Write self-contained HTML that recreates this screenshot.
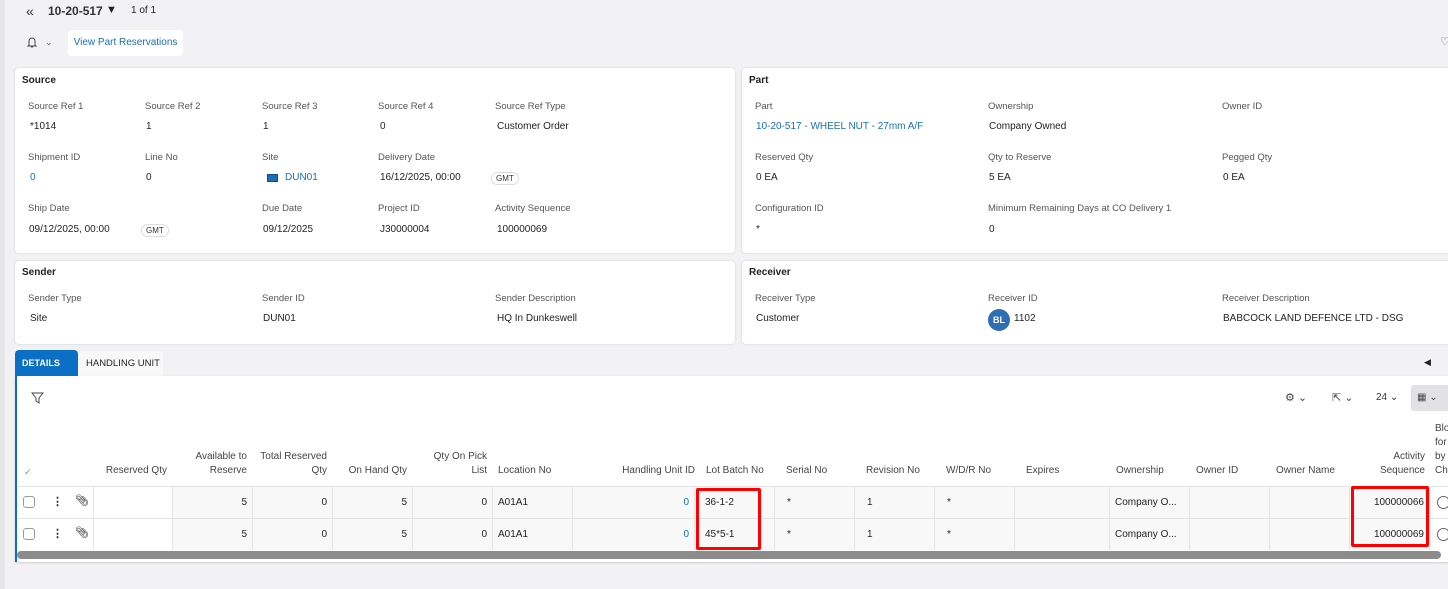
<!DOCTYPE html>
<html><head><meta charset="utf-8"><style>
*{box-sizing:border-box;margin:0;padding:0}
body{width:1448px;height:589px;overflow:hidden;background:#f2f1f3;font-family:"Liberation Sans",sans-serif;font-size:10px;color:#222;position:relative}
.a{position:absolute;white-space:nowrap}
.card{position:absolute;background:#fff;border-radius:4px;box-shadow:0 0 2px rgba(0,0,0,.15)}
.t{font-weight:bold;font-size:10px;color:#222}
.l{color:#555;font-size:9.5px}
.v{font-size:10px;color:#222}
.lnk{color:#1a6fb3}
.gmt{border:1px solid #ddd;border-radius:8px;font-size:8px;padding:1px 4px;color:#333}
.hd{color:#444;font-size:10px;line-height:14px}
.r{text-align:right}
.cell{position:absolute;border-right:1px solid #e4e4e4;height:31px;line-height:31px;padding:0 5px;font-size:10px}
</style></head><body>
<div style="position:absolute;left:0;top:0;width:5px;height:589px;background:#e6e5e8"></div>
<div class="a" style="left:26px;top:3px;font-size:14px;color:#333">«</div>
<div class="a" style="left:48px;top:4px;font-size:12px;font-weight:bold;color:#333">10-20-517</div>
<div class="a" style="left:106px;top:4px;font-size:11px">▼</div>
<div class="a" style="left:131px;top:5px;font-size:10px">1 of 1</div>
<svg class="a" style="left:26px;top:36px" width="12" height="13"><path d="M3 9V5a3 3 0 0 1 6 0v4l1 1H2z M5 11h2" stroke="#444" fill="none"/></svg>
<div class="a" style="left:45px;top:37px;font-size:9px;color:#666">⌄</div>
<div class="a" style="left:68px;top:30px;width:115px;height:26px;background:#fff;border-radius:4px;line-height:26px;text-align:center;font-size:10px" ><span class="lnk">View Part Reservations</span></div>
<div class="a" style="left:1440px;top:35px;font-size:11px;color:#666">♡</div>

<div class="card" style="left:15px;top:68px;width:720px;height:185px"></div>
<div class="a t" style="left:22px;top:75px">Source</div>
<div class="a l" style="left:28px;top:101px">Source Ref 1</div><div class="a v" style="left:30px;top:121px">*1014</div>
<div class="a l" style="left:145px;top:101px">Source Ref 2</div><div class="a v" style="left:146px;top:121px">1</div>
<div class="a l" style="left:262px;top:101px">Source Ref 3</div><div class="a v" style="left:263px;top:121px">1</div>
<div class="a l" style="left:378px;top:101px">Source Ref 4</div><div class="a v" style="left:380px;top:121px">0</div>
<div class="a l" style="left:495px;top:101px">Source Ref Type</div><div class="a v" style="left:497px;top:121px">Customer Order</div>
<div class="a l" style="left:28px;top:152px">Shipment ID</div><div class="a v lnk" style="left:30px;top:172px">0</div>
<div class="a l" style="left:145px;top:152px">Line No</div><div class="a v" style="left:146px;top:172px">0</div>
<div class="a l" style="left:262px;top:152px">Site</div>
<div class="a" style="left:267px;top:174px;width:11px;height:8px;background:#1a6fb3;border:1px solid #0e4f88"></div>
<div class="a v lnk" style="left:285px;top:172px">DUN01</div>
<div class="a l" style="left:378px;top:152px">Delivery Date</div><div class="a v" style="left:380px;top:172px">16/12/2025, 00:00</div>
<div class="a gmt" style="left:491px;top:172px">GMT</div>
<div class="a l" style="left:28px;top:203px">Ship Date</div><div class="a v" style="left:29px;top:224px">09/12/2025, 00:00</div>
<div class="a gmt" style="left:141px;top:224px">GMT</div>
<div class="a l" style="left:262px;top:203px">Due Date</div><div class="a v" style="left:263px;top:224px">09/12/2025</div>
<div class="a l" style="left:378px;top:203px">Project ID</div><div class="a v" style="left:380px;top:224px">J30000004</div>
<div class="a l" style="left:495px;top:203px">Activity Sequence</div><div class="a v" style="left:497px;top:224px">100000069</div>

<div class="card" style="left:742px;top:68px;width:720px;height:185px"></div>
<div class="a t" style="left:749px;top:75px">Part</div>
<div class="a l" style="left:755px;top:101px">Part</div><div class="a v lnk" style="left:756px;top:121px">10-20-517 - WHEEL NUT - 27mm A/F</div>
<div class="a l" style="left:988px;top:101px">Ownership</div><div class="a v" style="left:989px;top:121px">Company Owned</div>
<div class="a l" style="left:1222px;top:101px">Owner ID</div>
<div class="a l" style="left:755px;top:152px">Reserved Qty</div><div class="a v" style="left:756px;top:172px">0 EA</div>
<div class="a l" style="left:988px;top:152px">Qty to Reserve</div><div class="a v" style="left:989px;top:172px">5 EA</div>
<div class="a l" style="left:1222px;top:152px">Pegged Qty</div><div class="a v" style="left:1223px;top:172px">0 EA</div>
<div class="a l" style="left:755px;top:203px">Configuration ID</div><div class="a v" style="left:756px;top:224px">*</div>
<div class="a l" style="left:988px;top:203px">Minimum Remaining Days at CO Delivery 1</div><div class="a v" style="left:989px;top:224px">0</div>

<div class="card" style="left:15px;top:261px;width:720px;height:83px"></div>
<div class="a t" style="left:22px;top:267px">Sender</div>
<div class="a l" style="left:28px;top:293px">Sender Type</div><div class="a v" style="left:30px;top:313px">Site</div>
<div class="a l" style="left:262px;top:293px">Sender ID</div><div class="a v" style="left:263px;top:313px">DUN01</div>
<div class="a l" style="left:495px;top:293px">Sender Description</div><div class="a v" style="left:497px;top:313px">HQ In Dunkeswell</div>

<div class="card" style="left:742px;top:261px;width:720px;height:83px"></div>
<div class="a t" style="left:749px;top:267px">Receiver</div>
<div class="a l" style="left:755px;top:293px">Receiver Type</div><div class="a v" style="left:756px;top:313px">Customer</div>
<div class="a l" style="left:988px;top:293px">Receiver ID</div>
<div class="a" style="left:988px;top:309px;width:22px;height:22px;border-radius:50%;background:#2f6db5;color:#fff;font-size:9px;font-weight:bold;text-align:center;line-height:22px">BL</div>
<div class="a v" style="left:1014px;top:313px">1102</div>
<div class="a l" style="left:1222px;top:293px">Receiver Description</div><div class="a v" style="left:1223px;top:313px">BABCOCK LAND DEFENCE LTD - DSG</div>

<div class="a" style="left:15px;top:350px;width:63px;height:27px;background:#0b6fc6;border-radius:4px 4px 0 0;color:#fff;font-size:9px;font-weight:bold;line-height:27px;padding-left:7px">DETAILS</div>
<div class="a" style="left:78px;top:351px;width:85px;height:26px;background:#f8f8f9;border-radius:4px 4px 0 0;font-size:9.5px;line-height:26px;padding-left:8px;color:#222">HANDLING UNIT</div>
<div class="a" style="left:1424px;top:357px;font-size:9px">◀</div>
<div class="a" style="left:15px;top:376px;width:1440px;height:186px;background:#fff;border-left:2px solid #0b6fc6;box-shadow:0 1px 2px rgba(0,0,0,.15)"></div>
<svg class="a" style="left:31px;top:392px" width="13" height="13"><path d="M1 1h11l-4 5v5l-3-2V6z" stroke="#444" fill="none"/></svg>
<div class="a" style="left:1285px;top:391px;font-size:11px;color:#444">⚙ ⌄</div>
<div class="a" style="left:1332px;top:391px;font-size:11px;color:#444">⇱ ⌄</div>
<div class="a" style="left:1376px;top:392px;font-size:10px;color:#333">24 ⌄</div>
<div class="a" style="left:1411px;top:385px;width:40px;height:26px;background:#e2e2e4;border-radius:3px;font-size:10px;line-height:26px;padding-left:6px;color:#444">▦ ⌄</div>

<div class="a" style="left:24px;top:467px;font-size:9px;color:#888">✓</div>
<div class="a hd r" style="left:93px;top:464px;width:74px">Reserved Qty</div>
<div class="a hd r" style="left:173px;top:450px;width:74px">Available to<br>Reserve</div>
<div class="a hd r" style="left:253px;top:450px;width:74px">Total Reserved<br>Qty</div>
<div class="a hd r" style="left:333px;top:464px;width:74px">On Hand Qty</div>
<div class="a hd r" style="left:413px;top:450px;width:74px">Qty On Pick<br>List</div>
<div class="a hd" style="left:498px;top:464px">Location No</div>
<div class="a hd r" style="left:573px;top:464px;width:122px">Handling Unit ID</div>
<div class="a hd" style="left:706px;top:464px">Lot Batch No</div>
<div class="a hd" style="left:786px;top:464px">Serial No</div>
<div class="a hd" style="left:866px;top:464px">Revision No</div>
<div class="a hd" style="left:946px;top:464px">W/D/R No</div>
<div class="a hd" style="left:1026px;top:464px">Expires</div>
<div class="a hd" style="left:1116px;top:464px">Ownership</div>
<div class="a hd" style="left:1196px;top:464px">Owner ID</div>
<div class="a hd" style="left:1276px;top:464px">Owner Name</div>
<div class="a hd r" style="left:1350px;top:450px;width:75px">Activity<br>Sequence</div>
<div class="a hd" style="left:1435px;top:422px">Blo<br>for<br>by<br>Ch</div>

<div class="a" style="left:173px;top:487px;width:1260px;height:63px;background:#f8f8f8"></div>

<div class="a" style="left:23px;top:496px;width:12px;height:12px;border:1px solid #999;border-radius:3px;background:#fff"></div>
<div class="a" style="left:23px;top:528px;width:12px;height:12px;border:1px solid #999;border-radius:3px;background:#fff"></div>
<div class="a" style="left:52px;top:495px;font-size:11px;font-weight:bold">⋮</div>
<div class="a" style="left:52px;top:527px;font-size:11px;font-weight:bold">⋮</div>
<div class="a" style="left:75px;top:494px;font-size:11px">📎︎</div>
<div class="a" style="left:75px;top:526px;font-size:11px">📎︎</div>

<div class="cell r" style="left:93px;top:487px;width:80px;background:#fff;border-left:1px solid #e4e4e4"></div>
<div class="cell r" style="left:173px;top:487px;width:80px">5</div>
<div class="cell r" style="left:253px;top:487px;width:80px">0</div>
<div class="cell r" style="left:333px;top:487px;width:80px">5</div>
<div class="cell r" style="left:413px;top:487px;width:80px">0</div>
<div class="cell" style="left:493px;top:487px;width:80px">A01A1</div>
<div class="cell r lnk" style="left:573px;top:487px;width:122px">0</div>
<div class="cell" style="left:695px;top:487px;width:80px;padding-left:10px">36-1-2</div>
<div class="cell" style="left:775px;top:487px;width:80px;padding-left:12px">*</div>
<div class="cell" style="left:855px;top:487px;width:80px;padding-left:12px">1</div>
<div class="cell" style="left:935px;top:487px;width:80px;padding-left:12px">*</div>
<div class="cell" style="left:1015px;top:487px;width:95px"></div>
<div class="cell" style="left:1110px;top:487px;width:80px">Company O...</div>
<div class="cell" style="left:1190px;top:487px;width:80px"></div>
<div class="cell" style="left:1270px;top:487px;width:80px"></div>
<div class="cell r" style="left:1350px;top:487px;width:80px">100000066</div>

<div class="cell r" style="left:93px;top:519px;width:80px;background:#fff;border-left:1px solid #e4e4e4"></div>
<div class="cell r" style="left:173px;top:519px;width:80px">5</div>
<div class="cell r" style="left:253px;top:519px;width:80px">0</div>
<div class="cell r" style="left:333px;top:519px;width:80px">5</div>
<div class="cell r" style="left:413px;top:519px;width:80px">0</div>
<div class="cell" style="left:493px;top:519px;width:80px">A01A1</div>
<div class="cell r lnk" style="left:573px;top:519px;width:122px">0</div>
<div class="cell" style="left:695px;top:519px;width:80px;padding-left:10px">45*5-1</div>
<div class="cell" style="left:775px;top:519px;width:80px;padding-left:12px">*</div>
<div class="cell" style="left:855px;top:519px;width:80px;padding-left:12px">1</div>
<div class="cell" style="left:935px;top:519px;width:80px;padding-left:12px">*</div>
<div class="cell" style="left:1015px;top:519px;width:95px"></div>
<div class="cell" style="left:1110px;top:519px;width:80px">Company O...</div>
<div class="cell" style="left:1190px;top:519px;width:80px"></div>
<div class="cell" style="left:1270px;top:519px;width:80px"></div>
<div class="cell r" style="left:1350px;top:519px;width:80px">100000069</div>
<div class="a" style="left:17px;top:486px;width:1431px;height:1px;background:#e4e4e4"></div>
<div class="a" style="left:17px;top:518px;width:1431px;height:1px;background:#e4e4e4"></div>
<div class="a" style="left:1437px;top:496px;width:13px;height:13px;border:1px solid #666;border-radius:50%"></div>
<div class="a" style="left:1437px;top:528px;width:13px;height:13px;border:1px solid #666;border-radius:50%"></div>

<div class="a" style="left:696px;top:488px;width:65px;height:62px;border:3px solid #f00;border-radius:2px"></div>
<div class="a" style="left:1351px;top:486px;width:78px;height:61px;border:3px solid #f00;border-radius:2px"></div>

<div class="a" style="left:17px;top:551px;width:1424px;height:8px;background:#8c8c8c;border-radius:4px"></div>
</body></html>
